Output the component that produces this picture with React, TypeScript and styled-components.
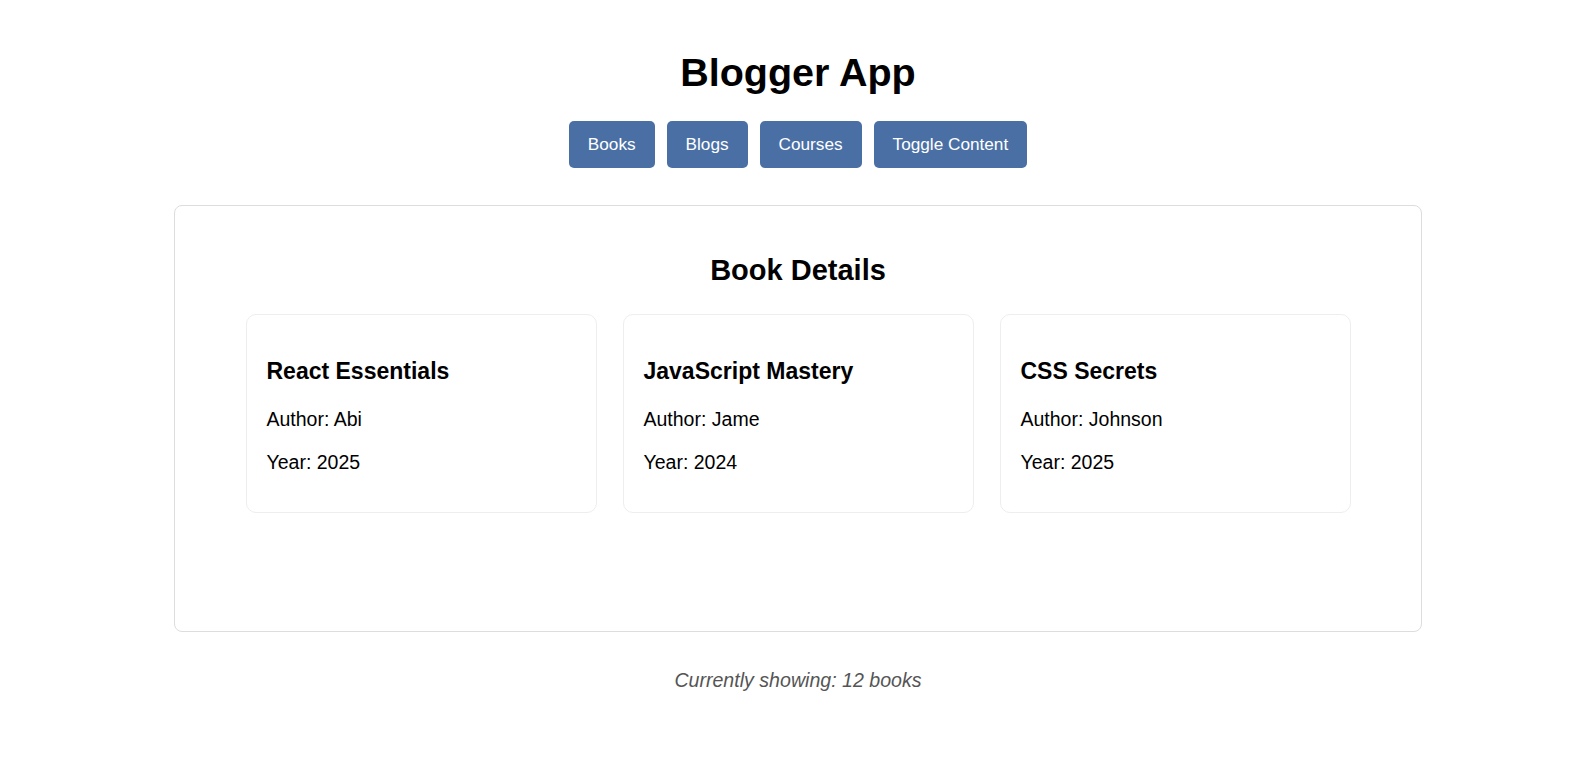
import React, { useState } from 'react'
import styled, { createGlobalStyle } from 'styled-components'

const GlobalStyle = createGlobalStyle`
  body {
    margin: 0;
    background: #fff;
    font-family: "Liberation Sans", Arial, sans-serif;
    color: #000;
  }
`

const Page = styled.div`
  display: flex;
  flex-direction: column;
  align-items: center;
  padding: 50px 0 40px 16px;
`
const Title = styled.h1`
  margin: 0;
  font-size: 39.5px;
  font-weight: bold;
`
const Nav = styled.nav`
  display: flex;
  gap: 12px;
  margin-top: 26px;
`
const NavButton = styled.button`
  font-family: inherit;
  font-size: 17.2px;
  padding: 13px 19px;
  color: #fff;
  background: #4a6fa5;
  border: none;
  border-radius: 5px;
  cursor: pointer;
`
const Panel = styled.section`
  box-sizing: border-box;
  width: 1248px;
  min-height: 427px;
  margin-top: 37px;
  padding: 24px;
  border: 1px solid #ddd;
  border-radius: 8px;
`
const PanelTitle = styled.h2`
  margin: 24px 0 27px;
  text-align: center;
  font-size: 29px;
`
const CardRow = styled.div`
  display: flex;
  justify-content: center;
  gap: 26px;
`
const Card = styled.article`
  box-sizing: border-box;
  width: 351px;
  padding: 20px 20px 19px;
  border: 1px solid #eee;
  border-radius: 10px;
  display: flow-root;
`
const CardTitle = styled.h3`
  margin: 23px 0;
  font-size: 23px;
`
const Line = styled.p`
  margin: 19.5px 0;
  font-size: 19.5px;
`
const Footer = styled.p`
  margin: 37px 0 0;
  font-size: 19.6px;
  font-style: italic;
  color: #555;
`

type TBook = { title: string; author: string; year: number }

const books: TBook[] = [
  { title: 'React Essentials', author: 'Abi', year: 2025 },
  { title: 'JavaScript Mastery', author: 'Jame', year: 2024 },
  { title: 'CSS Secrets', author: 'Johnson', year: 2025 },
]

function App() {
  const [tab, setTab] = useState('Books')
  return (
    <Page>
      <GlobalStyle />
      <Title>Blogger App</Title>
      <Nav>
        {['Books', 'Blogs', 'Courses', 'Toggle Content'].map((t) => (
          <NavButton key={t} onClick={() => setTab(t)}>
            {t}
          </NavButton>
        ))}
      </Nav>
      <Panel data-tab={tab}>
        <PanelTitle>Book Details</PanelTitle>
        <CardRow>
          {books.map((b) => (
            <Card key={b.title}>
              <CardTitle>{b.title}</CardTitle>
              <Line>Author: {b.author}</Line>
              <Line>Year: {b.year}</Line>
            </Card>
          ))}
        </CardRow>
      </Panel>
      <Footer>Currently showing: 12 books</Footer>
    </Page>
  )
}

export default App
